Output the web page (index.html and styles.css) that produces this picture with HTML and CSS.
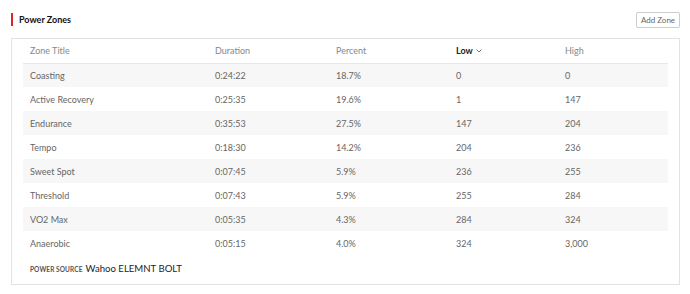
FILE: index.html
```html
<!DOCTYPE html>
<html>
<head>
<meta charset="utf-8">
<link rel="stylesheet" href="styles.css">
</head>
<body>
<div class="page">
  <div class="head">
    <h2 class="title">Power Zones</h2>
    <button class="btn">Add Zone</button>
  </div>
  <div class="card">
    <table class="zones">
      <colgroup>
        <col class="c1"><col class="c2"><col class="c3"><col class="c4"><col class="c5">
      </colgroup>
      <thead>
        <tr>
          <th>Zone Title</th>
          <th>Duration</th>
          <th>Percent</th>
          <th class="sorted">Low <svg class="caret" width="6" height="4" viewBox="0 0 6 4"><path d="M0.5 0.5 L3 3 L5.5 0.5" fill="none" stroke="#666" stroke-width="0.9"/></svg></th>
          <th>High</th>
        </tr>
      </thead>
      <tbody>
        <tr><td>Coasting</td><td>0:24:22</td><td>18.7%</td><td>0</td><td>0</td></tr>
        <tr><td>Active Recovery</td><td>0:25:35</td><td>19.6%</td><td>1</td><td>147</td></tr>
        <tr><td>Endurance</td><td>0:35:53</td><td>27.5%</td><td>147</td><td>204</td></tr>
        <tr><td>Tempo</td><td>0:18:30</td><td>14.2%</td><td>204</td><td>236</td></tr>
        <tr><td>Sweet Spot</td><td>0:07:45</td><td>5.9%</td><td>236</td><td>255</td></tr>
        <tr><td>Threshold</td><td>0:07:43</td><td>5.9%</td><td>255</td><td>284</td></tr>
        <tr><td>VO2 Max</td><td>0:05:35</td><td>4.3%</td><td>284</td><td>324</td></tr>
        <tr><td>Anaerobic</td><td>0:05:15</td><td>4.0%</td><td>324</td><td>3,000</td></tr>
      </tbody>
    </table>
    <div class="source"><span class="label">POWER SOURCE</span> <span class="device">Wahoo ELEMNT BOLT</span></div>
  </div>
</div>
</body>
</html>
```

FILE: styles.css
```css
* { box-sizing: border-box; }
html, body { margin: 0; padding: 0; background: #fff; }
body { font-family: Lato, "Open Sans", Arial, sans-serif; color: #666; }
.page { padding: 10px 10px 0 11px; }
.head { display: flex; align-items: center; justify-content: space-between; height: 19px; margin-bottom: 9px; }
.title {
  margin: 0;
  font-size: 9px;
  font-weight: 700;
  color: #111;
  border-left: 2px solid #e4202a;
  padding-left: 6px;
  line-height: 13px;
}
.btn {
  font-family: inherit;
  font-size: 8px;
  color: #666;
  background: #fff;
  border: 1px solid #ccc;
  border-radius: 2px;
  height: 16px;
  width: 44px;
  padding: 0;
  margin: 1px 0 0 0;
}
.card {
  border: 1px solid #e3e3e3;
  padding: 0 11px 0 11px;
}
.zones { width: 100%; border-collapse: collapse; table-layout: fixed; font-size: 9px; }
.c1 { width: 185px; } .c2 { width: 121px; } .c3 { width: 120px; } .c4 { width: 109px; } .c5 { width: auto; }
.zones th {
  text-align: left;
  font-weight: 400;
  color: #888;
  height: 24px;
  padding: 0 7px;
  border-bottom: 1px solid #e8e8e8;
}
.zones th.sorted { color: #222; font-weight: 700; }
.caret { margin-left: 1px; vertical-align: 1px; }
.zones td { height: 24px; padding: 0 7px; color: #666; }
.zones tbody tr:nth-child(odd) td { background: #f7f7f7; }
.source { display: flex; align-items: baseline; gap: 3px; height: 29px; padding: 8px 0 0 7px; }
.label { font-size: 6.5px; font-weight: 700; color: #555; letter-spacing: 0.1px; }
.device { font-size: 9.6px; color: #222; }
```
